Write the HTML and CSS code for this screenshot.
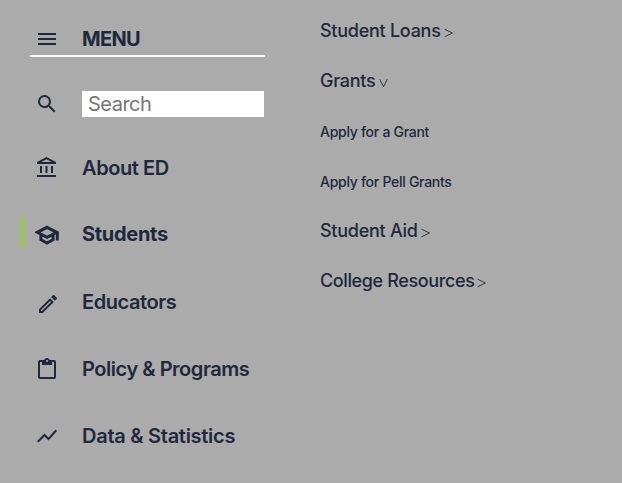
FILE: index.html
```html
<!DOCTYPE html>
<html lang="en">
<head>
<meta charset="utf-8">
<title>Menu</title>
<link rel="stylesheet" href="styles.css">
</head>
<body>
<div class="page">
  <nav class="sidebar">
    <div class="item menu"><svg class="icon" viewBox="0 0 24 24"><path d="M3 18h18v-2H3v2zm0-5h18v-2H3v2zm0-7v2h18V6H3z"/></svg><span class="label">MENU</span></div>
    <div class="item search"><svg class="icon" viewBox="0 0 24 24"><path d="M15.500 14h-.79l-.28-.27A6.471 6.471 0 0 0 16 9.500 6.500 6.500 0 1 0 9.500 16c1.610 0 3.090-.59 4.230-1.570l.27.28v.79l5 4.990L20.490 19l-4.990-5zm-6 0C7.010 14 5 11.990 5 9.500S7.010 5 9.500 5 14 7.010 14 9.500 11.990 14 9.500 14z"/></svg><input class="field" type="text" placeholder="Search" aria-label="Search"></div>
    <div class="item"><svg class="icon" viewBox="0 0 24 24"><path d="M7 10H5v7h2v-7zm5.500 0h-2v7h2v-7zm8.500 9H2v2h19v-2zm-3-9h-2v7h2v-7zm-6.500-6.740L16.710 6H6.290l5.210-2.740m0-2.260L2 6v2h19V6l-9.500-5z"/></svg><span class="label">About ED</span></div>
    <div class="item active"><svg class="icon cap" viewBox="0 0 24 24"><path d="M12 4.300L21.700 9.300 12 14.400 2.300 9.300zM5.900 11.400v5.300L12 20l6.100-3.300v-5.300M22.300 9.600v8"/></svg><span class="label">Students</span></div>
    <div class="item"><svg class="icon pencil" viewBox="0 0 24 24"><path d="M14.060 9.020l.92.92L5.920 19H5v-.92l9.060-9.060M17.660 3c-.25 0-.51.1-.7.29l-1.830 1.830 3.750 3.750 1.830-1.830a.996.996 0 0 0 0-1.410l-2.340-2.340c-.2-.2-.45-.29-.71-.29zm-3.600 3.190L3 17.250V21h3.750L17.810 9.940l-3.750-3.750z"/></svg><span class="label">Educators</span></div>
    <div class="item"><svg class="icon" viewBox="0 0 24 24"><path d="M19 3h-4.180C14.400 1.840 13.300 1 12 1s-2.400.84-2.820 2H5c-1.100 0-2 .9-2 2v15c0 1.100.9 2 2 2h14c1.100 0 2-.9 2-2V5c0-1.100-.9-2-2-2zm-7 0c.55 0 1 .45 1 1s-.45 1-1 1-1-.45-1-1 .45-1 1-1zm7 17H5V5h2v3h10V5h2v15z"/></svg><span class="label policy">Policy &amp; Programs</span></div>
    <div class="item"><svg class="icon" viewBox="0 0 24 24"><path d="M3.500 18.490l6-6.010 4 4L22 6.920l-1.410-1.410-7.090 7.970-4-4L2 16.990z"/></svg><span class="label data">Data &amp; Statistics</span></div>
  </nav>
  <div class="links">
    <div class="link">Student Loans<svg class="caret" viewBox="0 0 9 10"><path d="M.6 1.200L8.400 5 .6 8.800"/></svg></div>
    <div class="link">Grants<svg class="caret" viewBox="0 0 9 10"><path d="M.7 1.200L4.500 8.800 8.300 1.200"/></svg></div>
    <div class="link sub">Apply for a Grant</div>
    <div class="link sub">Apply for Pell Grants</div>
    <div class="link">Student Aid<svg class="caret" viewBox="0 0 9 10"><path d="M.6 1.200L8.400 5 .6 8.800"/></svg></div>
    <div class="link tight">College Resources<svg class="caret" viewBox="0 0 9 10"><path d="M.6 1.200L8.400 5 .6 8.800"/></svg></div>
  </div>
</div>
</body>
</html>
```
FILE: styles.css
```css
* { box-sizing: border-box; }
body {
  margin: 0;
  background: #ababab;
  color: #20293c;
  font-family: Inter, "Liberation Sans", sans-serif;
}
.page {
  display: flex;
  height: 483px;
  overflow: hidden;
}
.sidebar {
  width: 320px;
  padding: 23px 55px 0 30px;
  display: grid;
  grid-template-rows: 34px 94px 66px 68px 67px 67px 34px;
}
.item {
  position: relative;
  display: flex;
  align-items: center;
  height: 34px;
  padding-left: 5px;
  white-space: nowrap;
}
.menu { border-bottom: 2px solid #f6f6f6; }
.search { height: 94px; }
.icon {
  width: 24px;
  height: 24px;
  margin-right: 23px;
  flex: none;
  fill: currentColor;
}
.cap {
  fill: none;
  stroke: currentColor;
  stroke-width: 3;
  transform: translateY(1px);
}
.label {
  font-size: 20px;
  font-weight: 600;
  line-height: 24px;
  letter-spacing: -0.42px;
}
.menu .label { letter-spacing: -0.7px; font-weight: 700; }
.label.policy { letter-spacing: -0.46px; }
.label.data { letter-spacing: -0.27px; }
.active .label { font-weight: 700; letter-spacing: -0.3px; }
.field {
  width: 182px;
  height: 26px;
  padding: 0 6px;
  border: 0;
  border-radius: 0;
  background: #fff;
  font: 400 20px/26px Inter, "Liberation Sans", sans-serif;
  letter-spacing: -0.5px;
}
.field::placeholder { color: #757575; opacity: 1; }
.active::before {
  content: "";
  position: absolute;
  left: -10px;
  top: 0;
  width: 6px;
  height: 31px;
  border-radius: 1px;
  background: #9cc063;
}
.pencil { transform: translate(1px, 2px); }
.links { padding-top: 5px; }
.link {
  display: flex;
  align-items: center;
  height: 50px;
  font-size: 18px;
  font-weight: 500;
  letter-spacing: -0.26px;
  white-space: nowrap;
}
.link.tight { letter-spacing: -0.38px; }
.link.sub {
  padding-top: 2px;
  font-size: 14px;
  letter-spacing: -0.28px;
}
.caret {
  width: 9px;
  height: 10px;
  margin: 5px 0 0 3px;
  fill: none;
  stroke: #343a48;
  stroke-width: 1;
}
```
